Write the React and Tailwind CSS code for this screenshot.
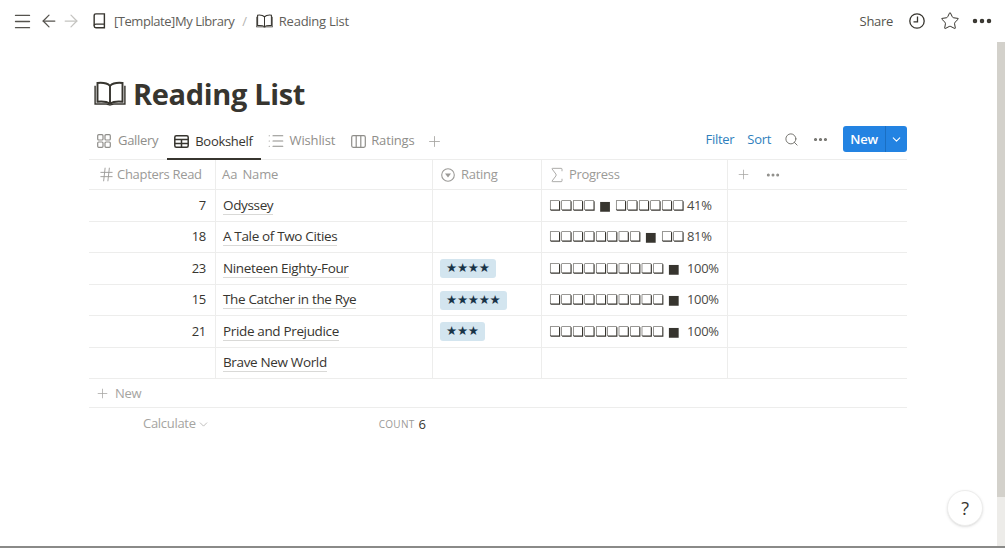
import { Menu, ArrowLeft, ArrowRight, Star, MoreHorizontal, Search, ChevronDown, Plus, Hash, Sigma, List } from "lucide-react";

function BookOpen({ className }) {
    return (
        <svg viewBox="0 0 32 26" className={className} fill="none" stroke="currentColor" strokeWidth="2">
            <path d="M16 5C13 2 8 1.500 3 2V21.500C8 21 13 21.500 16 23.500C19 21.500 24 21 29 21.500V2C24 1.500 19 2 16 5Z" />
            <path d="M16 5V23" />
            <path d="M0.500 5V24H12C14 24 15 25 16 25C17 25 18 24 20 24H31.500V5" strokeWidth="1.500" />
        </svg>
    );
}

function BookClosed() {
    return (
        <svg viewBox="0 0 14 18" className="w-[13px] h-[16px]" fill="none" stroke="#37352f" strokeWidth="1.600">
            <path d="M3 1H12.500V16.500H3C1.800 16.500 1 15.700 1 14.500V3C1 1.800 1.800 1 3 1Z" />
            <path d="M1 14C1 12.800 1.800 12.500 3 12.500H12.500" />
        </svg>
    );
}

function GalleryIcon() {
    return (
        <svg viewBox="0 0 14 14" className="w-[14px] h-[14px]" fill="none" stroke="#8f8e8a" strokeWidth="1.200">
            <rect x="0.700" y="0.700" width="5.300" height="5.300" rx="1" />
            <rect x="8" y="0.700" width="5.300" height="5.300" rx="1" />
            <rect x="0.700" y="8" width="5.300" height="5.300" rx="1" />
            <rect x="8" y="8" width="5.300" height="5.300" rx="1" />
        </svg>
    );
}

function TableIcon() {
    return (
        <svg viewBox="0 0 15 13" className="w-[15px] h-[13px]" fill="none" stroke="#37352f" strokeWidth="1.500">
            <rect x="0.800" y="0.800" width="13.400" height="11.400" rx="1.500" />
            <path d="M0.800 4.600H14.200M0.800 8.400H14.200M7.500 4.600V12.200" />
        </svg>
    );
}

function BoardIcon() {
    return (
        <svg viewBox="0 0 15 13" className="w-[15px] h-[13px]" fill="none" stroke="#8f8e8a" strokeWidth="1.200">
            <rect x="0.700" y="0.700" width="13.600" height="11.600" rx="1.500" />
            <path d="M5.200 0.700V12.300M9.800 0.700V12.300" />
        </svg>
    );
}

function ClockIcon() {
    return (
        <svg viewBox="0 0 16 16" className="w-4 h-4" fill="none" stroke="#37352f" strokeWidth="1.300">
            <circle cx="8" cy="8" r="7.200" />
            <path d="M8.500 3.500V8.800H4.500" />
        </svg>
    );
}

function SelectIcon() {
    return (
        <svg viewBox="0 0 14 14" className="w-[14px] h-[14px]" fill="none" stroke="#9b9a97" strokeWidth="1.100">
            <circle cx="7" cy="7" r="6.300" />
            <path d="M4 5.500H10L7 9.500Z" fill="#9b9a97" stroke="none" />
        </svg>
    );
}

const cols = ["w-[127px]", "w-[217px]", "w-[109px]", "w-[186px]"];

const books = [
    { read: 7, name: "Odyssey", stars: "", progress: "❏❏❏❏ ■ ❏❏❏❏❏❏", pct: "41%", h: "h-[32px]" },
    { read: 18, name: "A Tale of Two Cities", stars: "", progress: "❏❏❏❏❏❏❏❏ ■ ❏❏", pct: "81%", h: "h-[31px]" },
    { read: 23, name: "Nineteen Eighty-Four", stars: "★★★★", progress: "❏❏❏❏❏❏❏❏❏❏ ■", pct: "100%", h: "h-[32px]" },
    { read: 15, name: "The Catcher in the Rye", stars: "★★★★★", progress: "❏❏❏❏❏❏❏❏❏❏ ■", pct: "100%", h: "h-[31px]" },
    { read: 21, name: "Pride and Prejudice", stars: "★★★", progress: "❏❏❏❏❏❏❏❏❏❏ ■", pct: "100%", h: "h-[32px]" },
    { read: "", name: "Brave New World", stars: "", progress: "", pct: "", h: "h-[31px]" },
];

function Row({ book }) {
    return (
        <div className={`flex ${book.h} border-b border-[#ededec] text-[#37352f]`}>
            <div className={`${cols[0]} shrink-0 border-r border-[#ededec] flex items-center justify-end pr-[9px]`}>{book.read}</div>
            <div className={`${cols[1]} shrink-0 border-r border-[#ededec] flex items-center pl-[7px]`}>
                <span className="font-medium text-[13.500px] tracking-[-0.35px] leading-[17px] border-b border-[#d9d9d7]">{book.name}</span>
            </div>
            <div className={`${cols[2]} shrink-0 border-r border-[#ededec] flex items-center pl-[7px]`}>
                {book.stars && (
                    <span className="bg-[#d3e5ef] text-[#183347] rounded-[3px] px-[6px] h-[19px] flex items-center text-[12.500px] tracking-[-0.3px] font-['DejaVu_Sans',sans-serif]">
                        {book.stars}
                    </span>
                )}
            </div>
            <div className={`${cols[3]} shrink-0 border-r border-[#ededec] flex items-center pl-[7px] whitespace-pre`}>
                <span className="will-change-transform font-['DejaVu_Sans',sans-serif] text-[12.800px] tracking-normal text-[#37352f]">{book.progress}</span>
                {book.pct && <span className={book.pct === "100%" ? "ml-[7px] text-[#4b4a45]" : "ml-[3px] text-[#4b4a45]"}>{book.pct}</span>}
            </div>
        </div>
    );
}

export default function App() {
    return (
        <div className="h-[548px] w-[1005px] overflow-hidden bg-white flex flex-col font-['Open_Sans','Noto_Sans',sans-serif] text-[13px] tracking-[-0.3px] border-b-2 border-[#8a8a88]">
            {/* Top bar */}
            <div className="h-[42px] shrink-0 flex items-center text-[#37352f]">
                <Menu className="w-[21px] h-[21px] ml-[12px] text-[#55534e]" strokeWidth={1.500} />
                <ArrowLeft className="w-[20px] h-[20px] ml-[6px] text-[#55534e]" strokeWidth={1.500} />
                <ArrowRight className="w-[20px] h-[20px] ml-[2px] text-[#c4c3c0]" strokeWidth={1.500} />
                <div className="ml-[12px]"><BookClosed /></div>
                <span className="ml-[8px] mt-[2px] tracking-[-0.45px] text-[#5f5e5a]">[Template]My Library</span>
                <span className="ml-[8px] mt-[2px] text-[#b5b4b1]">/</span>
                <BookOpen className="w-[17px] h-[14px] ml-[9px] text-[#37352f]" />
                <span className="ml-[6px] mt-[2px] tracking-[-0.25px] text-[#5f5e5a]">Reading List</span>
                <div className="ml-auto flex items-center mr-[11px]">
                    <span className="text-[#55534e] mt-[2px]">Share</span>
                    <div className="ml-[16px]"><ClockIcon /></div>
                    <Star className="w-[20px] h-[20px] ml-[15px] text-[#37352f]" strokeWidth={1.200} />
                    <MoreHorizontal className="w-[24px] h-[24px] ml-[10px] text-[#37352f]" strokeWidth={2.500} />
                </div>
            </div>

            <div className="flex flex-1 min-h-0">
                <div className="flex-1 relative pl-[89px] pr-[90px]">
                    {/* Title */}
                    <div className="flex items-center h-[66px] mt-[18px]">
                        <BookOpen className="w-[32px] h-[25px] ml-[5px] text-[#37352f]" />
                        <h1 className="ml-[7px] text-[29px] tracking-[-0.35px] font-bold text-[#37352f] leading-none">Reading List</h1>
                    </div>

                    {/* Views */}
                    <div className="h-[33px] flex items-center text-[#8f8e8a] relative">
                        <div className="flex items-center ml-[8px] mb-[3px]">
                            <GalleryIcon />
                            <span className="ml-[7px]">Gallery</span>
                        </div>
                        <div className="flex items-center ml-[9px] text-[#37352f] font-medium h-full border-b-2 border-[#37352f] pl-[7px] pr-[8px] pb-[1px] -mb-[1px]">
                            <TableIcon />
                            <span className="ml-[6px]">Bookshelf</span>
                        </div>
                        <div className="flex items-center ml-[6px] mb-[3px] tracking-[-0.15px]">
                            <List className="w-[18px] h-[18px]" strokeWidth={1.500} />
                            <span className="ml-[5px]">Wishlist</span>
                        </div>
                        <div className="flex items-center ml-[16px] mb-[3px] tracking-[-0.15px]">
                            <BoardIcon />
                            <span className="ml-[5px]">Ratings</span>
                        </div>
                        <Plus className="w-[17px] h-[17px] ml-[11px] mb-[3px] text-[#a5a4a1]" strokeWidth={1.200} />

                        <div className="ml-auto flex items-center mb-[7px]">
                            <span className="text-[#2f7fbd] mt-[1px]">Filter</span>
                            <span className="text-[#2f7fbd] ml-[13px] mt-[1px]">Sort</span>
                            <Search className="w-[15px] h-[15px] ml-[13px] text-[#6f6e69]" strokeWidth={1.500} />
                            <MoreHorizontal className="w-[17px] h-[17px] ml-[13px] text-[#6f6e69]" strokeWidth={2.500} />
                            <div className="ml-[14px] h-[26px] w-[64px] bg-[#2383e2] rounded-[3px] flex items-center text-white font-semibold">
                                <span className="w-[43px] text-center border-r border-[#1a6fc2] leading-[26px]">New</span>
                                <ChevronDown className="w-[13px] h-[13px] ml-[4px]" strokeWidth={2} />
                            </div>
                        </div>
                    </div>

                    {/* Table */}
                    <div className="border-t border-[#ededec]">
                        <div className="flex h-[30px] border-b border-[#ededec] text-[#9b9a97]">
                            <div className={`${cols[0]} shrink-0 border-r border-[#ededec] flex items-center pl-[9px]`}>
                                <Hash className="w-[17px] h-[17px]" strokeWidth={1.300} />
                                <span className="ml-[2px] whitespace-nowrap">Chapters Read</span>
                            </div>
                            <div className={`${cols[1]} shrink-0 border-r border-[#ededec] flex items-center pl-[6px]`}>
                                <span className="text-[13px] tracking-normal">Aa</span>
                                <span className="ml-[5px] tracking-[-0.15px]">Name</span>
                            </div>
                            <div className={`${cols[2]} shrink-0 border-r border-[#ededec] flex items-center pl-[8px]`}>
                                <SelectIcon />
                                <span className="ml-[6px]">Rating</span>
                            </div>
                            <div className={`${cols[3]} shrink-0 border-r border-[#ededec] flex items-center pl-[5px]`}>
                                <Sigma className="w-[20px] h-[20px]" strokeWidth={1.000} />
                                <span className="ml-[2px]">Progress</span>
                            </div>
                            <div className="flex items-center pl-[8px]">
                                <Plus className="w-[15px] h-[15px] text-[#a5a4a1]" strokeWidth={1.200} />
                                <MoreHorizontal className="w-[16px] h-[16px] ml-[14px] text-[#8f8e8a]" strokeWidth={2.500} />
                            </div>
                        </div>
                        {books.map((book) => (
                            <Row key={book.name} book={book} />
                        ))}
                        <div className="h-[29px] flex items-center border-b border-[#ededec] text-[#a5a4a1] pl-[6px]">
                            <Plus className="w-[15px] h-[15px]" strokeWidth={1.200} />
                            <span className="ml-[5px] mt-[1px]">New</span>
                        </div>
                        <div className="h-[33px] flex items-center text-[#a5a4a1]">
                            <span className="ml-[54px] -mt-[1px]">Calculate</span>
                            <ChevronDown className="w-[13px] h-[13px] ml-[1px] -mt-[1px]" strokeWidth={1.300} />
                            <span className="ml-[169px] text-[10px] tracking-[0.3px] text-[#9b9a97]">COUNT</span>
                            <span className="ml-[4px] text-[#37352f]">6</span>
                        </div>
                    </div>

                    {/* Help */}
                    <div className="absolute right-[14px] top-[448px] w-[36px] h-[36px] rounded-full bg-white border border-[#ededec] shadow-sm flex items-center justify-center text-[18px] text-[#37352f]">
                        ?
                    </div>
                </div>

                {/* Scrollbar */}
                <div className="w-[8px] shrink-0 bg-[#edece9]">
                    <div className="h-[455px] bg-[#d3d1cb]" />
                </div>
            </div>
        </div>
    );
}
